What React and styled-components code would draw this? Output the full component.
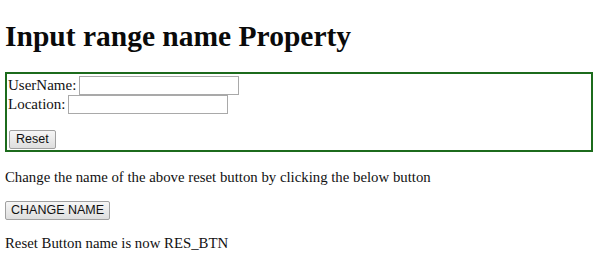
import styled, { createGlobalStyle } from "styled-components";

const Global = createGlobalStyle`
  body {
    margin: 0;
    background: #fff;
    font-family: "Liberation Serif", "Times New Roman", serif;
    color: #111;
  }
`;

const Page = styled.div`
  padding: 0 7px 0 5px;
`;

const Title = styled.h1`
  margin: 0;
  padding-top: 18px;
  font-size: 29.5px;
  line-height: 36px;
  font-weight: bold;
  color: #0a0a0a;
`;

const FormBox = styled.form`
  margin-top: 18px;
  border: 2px solid #1c6b1c;
  padding: 2px 1px;
  box-sizing: border-box;
  height: 80px;
`;

const Row = styled.div`
  display: flex;
  align-items: center;
  gap: 3px;
  font-size: 15px;
  line-height: 19px;
  height: 19px;
`;

const TextInput = styled.input`
  width: 160px;
  height: 19px;
  box-sizing: border-box;
  margin: 0;
  border: 1px solid #a9a9a9;
  padding: 0;
`;

const Button = styled.button`
  font-family: "Liberation Sans", Arial, sans-serif;
  font-size: 12.5px;
  color: #111;
  height: 19px;
  padding: 0 5px;
  background: linear-gradient(#f6f6f6, #dedede);
  border: 1px solid #a0a0a0;
  border-radius: 2px;
  line-height: 17px;
`;

const ResetButton = styled(Button)`
  margin: 16px 0 0 1px;
  padding: 0 6px;
`;

const Text = styled.p`
  margin: ${(p) => p.$top}px 0 0 0;
  font-size: 14.8px;
  line-height: 19px;
`;

const ChangeButton = styled(Button)`
  margin-top: 14px;
  display: block;
`;

export default function App() {
  return (
    <Page>
      <Global />
      <Title>Input range name Property</Title>
      <FormBox onSubmit={(e) => e.preventDefault()}>
        <Row>
          UserName:<TextInput type="text" />
        </Row>
        <Row>
          Location:<TextInput type="text" />
        </Row>
        <ResetButton type="reset">Reset</ResetButton>
      </FormBox>
      <Text $top={16}>Change the name of the above reset button by clicking the below button</Text>
      <ChangeButton type="button">CHANGE NAME</ChangeButton>
      <Text $top={14}>Reset Button name is now RES_BTN</Text>
    </Page>
  );
}
